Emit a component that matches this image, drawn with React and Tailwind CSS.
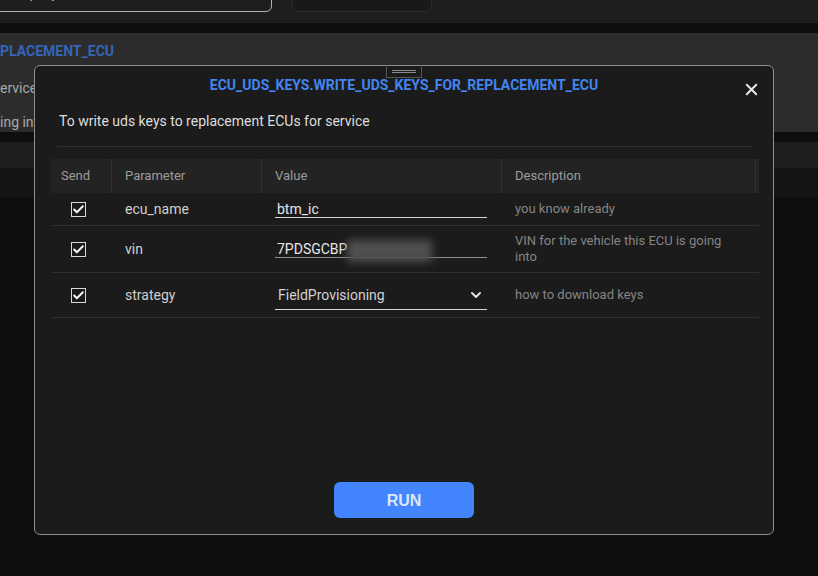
import { useState } from 'react'
import { X, ChevronDown, Check, Search } from 'lucide-react'

const cols = 'grid grid-cols-[60px_150px_240px_258px]'

function SendBox() {
  return (
    <div className="pl-5">
      <div className="flex h-[15px] w-[15px] items-center justify-center border border-[#d8d8d8]">
        <Check size={13} strokeWidth={3.5} className="text-white" />
      </div>
    </div>
  )
}

function Row({ name, desc, height, children }) {
  return (
    <div className={`${cols} items-center border-b border-[#2f2f2f] ${height}`}>
      <SendBox />
      <div className="pl-3.5 text-sm text-[#cfcfcf]">{name}</div>
      <div className="px-3.5">{children}</div>
      <div className="pl-3.5 pr-[30px] text-[13px] leading-4 text-[#848484]">{desc}</div>
    </div>
  )
}

export default function App() {
  const [open] = useState(true)

  return (
    <div className="relative h-[576px] w-[818px] overflow-hidden bg-[#0e0e0e] font-['Roboto',sans-serif]">
      {/* page behind the dialog */}
      <div className="h-[23px] overflow-hidden bg-[#1e1e1e]">
        <div className="flex gap-[20px]">
          <div className="-ml-2 -mt-6 flex h-[36px] w-[280px] items-end gap-2.5 rounded-md border border-[#b5b5b5] pb-[8px] pl-[26px] text-sm leading-5 text-[#c8c8c8]">
            <Search size={14} strokeWidth={2.5} className="mb-[1px] text-[#b0b0b0]" />
            <span>Sp</span>
          </div>
          <div className="-mt-6 h-[36px] w-[140px] rounded-md border border-[#2a2a2a] bg-[#191919]" />
        </div>
      </div>
      <div className="mt-[10px] h-[99px] overflow-hidden bg-[#2c2c2c]">
        <div className="mt-[8px] text-sm font-bold leading-5 text-[#3565b9] whitespace-nowrap">PLACEMENT_ECU</div>
        <div className="mt-[17px] text-sm leading-5 text-[#a8a8a8]">ervice</div>
        <div className="mt-[14px] text-sm leading-5 text-[#a8a8a8] whitespace-nowrap">ing into</div>
      </div>
      <div className="mt-[10px] h-[26px] bg-[#1e1e1e]" />
      <div className="h-[29px] bg-[#141414]" />

      {open && (
        <div className="absolute left-[34px] top-[65px] flex h-[470px] w-[740px] flex-col rounded-md border border-[#8f8f8f] bg-[#1b1b1b] pl-4 pr-[14px]">
          <div className="absolute left-[351px] -top-px flex h-[13px] w-9 flex-col items-center justify-center gap-[1px] border border-t-0 border-[#555] pt-px">
            <div className="h-px w-6 bg-[#8a8a8a]" />
            <div className="h-px w-6 bg-[#8a8a8a]" />
          </div>
          <button className="absolute right-[12px] top-[14px] text-[#e8e8e8]">
            <X size={19} strokeWidth={2.5} />
          </button>

          <h2 className="mt-[11px] pr-[2px] text-center text-sm font-bold leading-4 text-[#4285f0]">
            ECU_UDS_KEYS.WRITE_UDS_KEYS_FOR_REPLACEMENT_ECU
          </h2>
          <p className="ml-2 mt-[18px] text-sm leading-5 text-[#dedede]">
            To write uds keys to replacement ECUs for service
          </p>
          <div className="ml-1.5 mr-[7px] mt-[15px] h-px bg-[#2f2f2f]" />

          <div className={`${cols} mt-3 h-[34px] shrink-0 items-center bg-[#232323] text-[13px] text-[#9c9c9c]`}>
            <div className="flex h-[34px] items-center pl-2.5">Send</div>
            <div className="flex h-[34px] items-center border-l border-[#333] pl-[13px]">Parameter</div>
            <div className="flex h-[34px] items-center border-l border-[#333] pl-[13px]">Value</div>
            <div className="mr-[3px] flex h-[34px] items-center border-x border-[#333] pl-[13px]">Description</div>
          </div>

          <Row name="ecu_name" desc="you know already" height="h-[33px]">
            <div className="mb-[6px] flex h-6 items-end border-b border-[#d6d6d6] pl-[2px] text-sm leading-4 text-[#e6e6e6]">
              btm_ic
            </div>
          </Row>
          <Row name="vin" desc="VIN for the vehicle this ECU is going into" height="h-[47px]">
            <div className="mb-[7px] flex h-6 items-end border-b border-[#8c8c8c] pl-[2px] text-sm leading-4 text-[#e6e6e6]">
              7PDSGCBP
              <span className="relative -mb-[5px] h-[22px] w-[85px] bg-[#505050] blur-[4px]" />
            </div>
          </Row>
          <Row name="strategy" desc="how to download keys" height="h-[45px]">
            <div className="flex h-[29px] items-center justify-between border-b border-[#d6d6d6] pl-[3px] pr-[3px] text-sm text-[#d2d2d2]">
              FieldProvisioning
              <ChevronDown size={16} strokeWidth={3} className="text-[#e0e0e0]" />
            </div>
          </Row>

          <div className="mb-4 mt-auto flex justify-center pr-[2px]">
            <button className="h-9 w-[140px] rounded-md bg-[#4285ff] pt-px font-['Liberation_Sans',sans-serif] text-base font-bold text-[#dbe6f7]">
              RUN
            </button>
          </div>
        </div>
      )}
    </div>
  )
}
